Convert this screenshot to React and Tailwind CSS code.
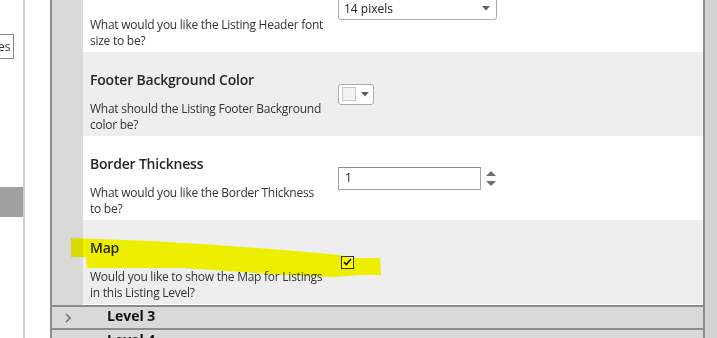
import React from 'react';

const font = { fontFamily: '"Open Sans", "Noto Sans", sans-serif' };

function Row({ title, desc, shade, shift, children }) {
    return (
        <div className={`flex h-[84px] shrink-0 ${shade ? 'bg-[#eeeeee]' : 'bg-white'} ${shift ? '-mt-[32px]' : ''}`}>
            <div className="w-[248px] shrink-0 pl-[7px] pt-[18px]">
                <div className="h-[20px] text-[14px] leading-[20px] font-semibold text-[#262626] tracking-[-0.2px]">{title}</div>
                <div className="mt-[11px] text-[12px] leading-[16px] text-[#333] tracking-[-0.25px]">{desc}</div>
            </div>
            <div className="flex items-center pl-[7px]">{children}</div>
        </div>
    );
}

function Caret() {
    return (
        <svg width="8" height="5" viewBox="0 0 8 5"><path d="M0 0h8L4 4.5z" fill="#606060" /></svg>
    );
}

export default function App() {
    return (
        <div className="relative flex w-[717px] h-[338px] overflow-hidden bg-white" style={font}>
            {/* far left pane */}
            <div className="w-[23px] shrink-0 flex flex-col">
                <div className="mt-[34px] h-[25px] w-[14px] border border-l-0 border-[#8a8a8a] flex items-center overflow-hidden">
                    <span className="text-[12px] text-[#333] leading-none -ml-[2px]">es</span>
                </div>
                <div className="mt-[128px] h-[30px] w-[23px] bg-[#a0a0a0]" />
            </div>
            <div className="w-[2px] shrink-0 bg-[#cfcfcf]" />
            <div className="w-[25px] shrink-0 bg-white" />
            <div className="w-[2px] shrink-0 bg-[#8c8c8c]" />

            {/* settings grid */}
            <div className="w-[651px] shrink-0 flex flex-col">
                <div className="flex h-[305px] shrink-0">
                    <div className="w-[31px] shrink-0 bg-[#d9d9d9]" />
                    <div className="flex-1 flex flex-col overflow-hidden">
                        <Row shift title="" desc={<>What would you like the Listing Header font<br />size to be?</>}>
                            <div className="-mt-[3px] w-[159px] h-[23px] border border-[#ababab] rounded-[3px] bg-white flex items-center justify-between pl-[5px] pr-[6px]">
                                <span className="text-[12px] text-[#222]">14 pixels</span>
                                <Caret />
                            </div>
                        </Row>
                        <Row shade title="Footer Background Color" desc={<>What should the Listing Footer Background<br />color be?</>}>
                            <div className="w-[36px] h-[21px] border border-[#ababab] rounded-[3px] bg-white flex items-center pl-[3px] gap-[5px]">
                                <div className="w-[14px] h-[14px] border border-[#c8c8c8] bg-[#f2f2f2]" />
                                <Caret />
                            </div>
                        </Row>
                        <Row title="Border Thickness" desc={<>What would you like the Border Thickness<br />to be?</>}>
                            <div className="w-[143px] h-[23px] border border-[#a0a0a0] border-t-[#8a8a8a] bg-white flex items-center pl-[6px]">
                                <span className="text-[12px] text-[#222]">1</span>
                            </div>
                            <div className="ml-[5px] flex flex-col gap-[5px]">
                                <svg width="10" height="5" viewBox="0 0 10 5"><path d="M5 0L10 5H0z" fill="#707070" /></svg>
                                <svg width="10" height="5" viewBox="0 0 10 5"><path d="M0 0h10L5 5z" fill="#707070" /></svg>
                            </div>
                        </Row>
                        <Row shade title="Map" desc={<>Would you like to show the Map for Listings<br />in this Listing Level?</>}>
                            <div className="ml-[3px] w-[13px] h-[13px] border border-[#333] bg-white flex items-center justify-center">
                                <svg width="9" height="8" viewBox="0 0 9 8"><path d="M1 4.2L3.4 6.5L8 1" stroke="#111" strokeWidth="1.6" fill="none" /></svg>
                            </div>
                        </Row>
                    </div>
                </div>
                <div className="h-[23px] shrink-0 border-t-2 border-[#8c8c8c] bg-[#d9d9d9] flex items-center">
                    <svg className="ml-[13px]" width="6" height="10" viewBox="0 0 6 10"><path d="M1 1l4 4-4 4" stroke="#777" strokeWidth="1.6" fill="none" /></svg>
                    <span className="ml-[36px] -mt-[3px] text-[14px] leading-[18px] font-bold text-[#111]">Level 3</span>
                </div>
                <div className="h-[30px] shrink-0 border-t-2 border-[#8c8c8c] bg-[#d9d9d9] flex items-start">
                    <span className="ml-[55px] mt-[1px] text-[14px] leading-[18px] font-bold text-[#111]">Level 4</span>
                </div>
            </div>

            <div className="w-[2px] shrink-0 bg-[#8c8c8c]" />
            <div className="flex-1 bg-[#d4d4d4]" />

            {/* yellow marker annotation */}
            <svg className="absolute left-0 top-0 pointer-events-none mix-blend-multiply" width="717" height="338">
                <polygon
                    fill="#ffff00"
                    points="71,238 150,241 217,245 283,250 340,255 350,258 380,258 381,275 360,275 333,277 283,275 183,268 127,268 87,268 86,257 71,257"
                />
            </svg>
        </div>
    );
}
